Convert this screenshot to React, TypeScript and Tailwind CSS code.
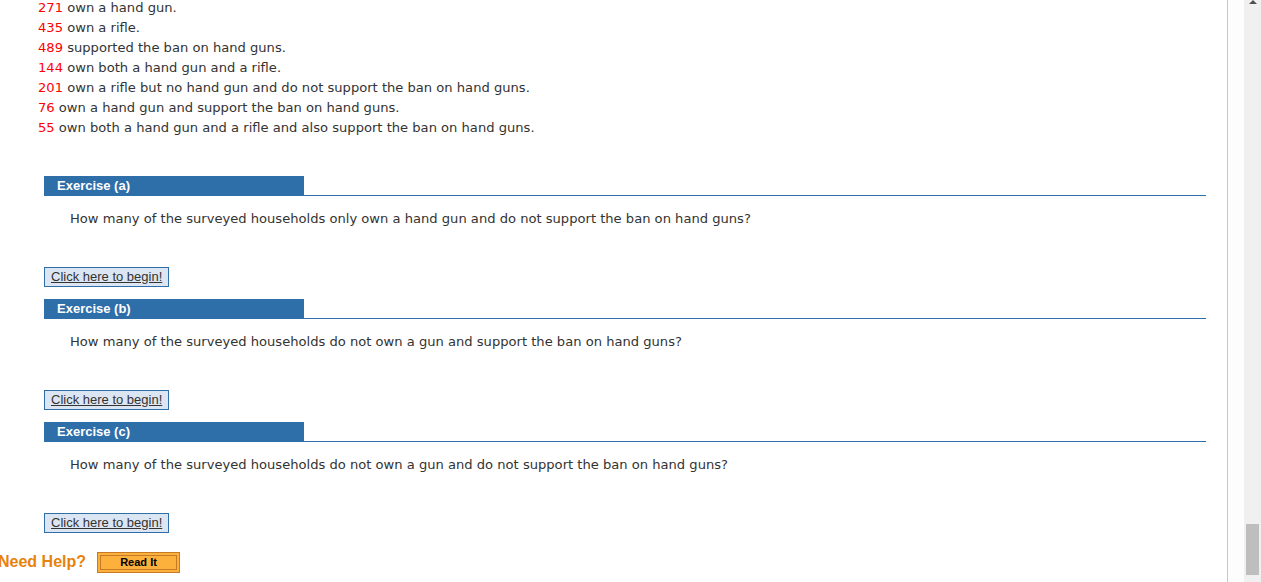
import React from 'react';

const facts: [string, string][] = [
  ['271', 'own a hand gun.'],
  ['435', 'own a rifle.'],
  ['489', 'supported the ban on hand guns.'],
  ['144', 'own both a hand gun and a rifle.'],
  ['201', 'own a rifle but no hand gun and do not support the ban on hand guns.'],
  ['76', 'own a hand gun and support the ban on hand guns.'],
  ['55', 'own both a hand gun and a rifle and also support the ban on hand guns.'],
];

const exercises = [
  { label: 'Exercise (a)', question: 'How many of the surveyed households only own a hand gun and do not support the ban on hand guns?' },
  { label: 'Exercise (b)', question: 'How many of the surveyed households do not own a gun and support the ban on hand guns?' },
  { label: 'Exercise (c)', question: 'How many of the surveyed households do not own a gun and do not support the ban on hand guns?' },
];

const verdana = { fontFamily: '"DejaVu Sans", Verdana, sans-serif' };
const arial = { fontFamily: '"Liberation Sans", Arial, sans-serif' };

const Exercise = ({ label, question }: { label: string; question: string }) => (
  <div className="mb-[12px]">
    {/* Header tab with rule */}
    <div className="ml-[44px] w-[1162px] border-b border-[#2e6ea9]">
      <div
        className="w-[260px] h-[19px] bg-[#2e6ea9] text-white font-bold text-[13px] leading-[19px] pl-[13px]"
        style={arial}
      >
        {label}
      </div>
    </div>
    <p className="mt-[13px] ml-[70px] text-[13.1px] leading-[20px] text-[#333]" style={verdana}>
      {question}
    </p>
    <button
      className="block mt-[38px] ml-[44px] h-[20px] w-[125px] border border-[#2e6ea9] bg-[#dce6f2] text-[13px] leading-[18px] text-[#333] underline text-left pl-[6px] whitespace-nowrap"
      style={arial}
    >
      Click here to begin!
    </button>
  </div>
);

const App = () => {
  return (
    <div className="w-[1261px] h-[582px] overflow-hidden flex bg-white">
      {/* Main content */}
      <div className="w-[1227px] shrink-0">
        <div className="mt-[-2px] ml-[38px] text-[13.1px] leading-[20px] text-[#333]" style={verdana}>
          {facts.map(([n, t]) => (
            <div key={n}>
              <span className="text-[#ff0000]">{n}</span> {t}
            </div>
          ))}
        </div>

        <div className="mt-[38px]">
          {exercises.map((e) => (
            <Exercise key={e.label} label={e.label} question={e.question} />
          ))}
        </div>

        {/* Help */}
        <div className="pt-[6px] ml-[-2px] flex items-center">
          <span className="text-[16px] font-bold text-[#e8820c] leading-[22px] whitespace-nowrap" style={arial}>
            Need Help?
          </span>
          <div className="ml-[11px] w-[83px] h-[21px] border border-[#c77a26] bg-[#fbb13c] p-[2px]">
            <div
              className="h-full border border-[#c77a26] flex items-center justify-center text-[11px] font-bold text-black"
              style={arial}
            >
              Read It
            </div>
          </div>
        </div>
      </div>

      {/* Side rule */}
      <div className="w-px h-full bg-[#c8c8c8]" />
      <div className="w-[16px] h-full bg-[#fdfdfd]" />

      {/* Scrollbar */}
      <div className="w-[17px] h-full bg-[#f0f0f0] flex flex-col items-center">
        <div className="w-0 h-0 border-l-[4px] border-r-[4px] border-b-[4px] border-l-transparent border-r-transparent border-b-[#505050]" />
        <div className="mt-[520px] w-[13px] h-[51px] bg-[#bebebe]" />
      </div>
    </div>
  );
};

export default App;
